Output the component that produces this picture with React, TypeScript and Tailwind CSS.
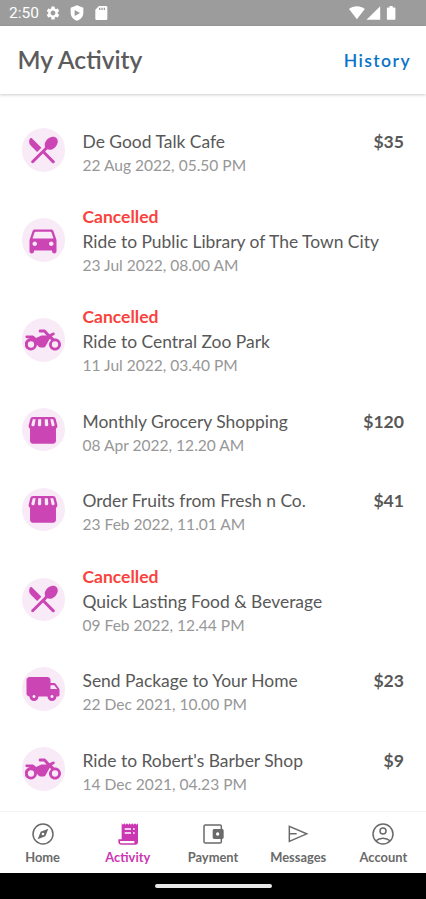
import type { ReactNode } from "react";
import { MdSettings } from "react-icons/md";

type IconName = "food" | "car" | "bike" | "store" | "truck";

type Activity = {
  icon: IconName;
  title: string;
  date: string;
  price?: string;
};

const activities: Activity[] = [
  { icon: "food", title: "De Good Talk Cafe", date: "22 Aug 2022, 05.50 PM", price: "$35" },
  { icon: "car", title: "Ride to Public Library of The Town City", date: "23 Jul 2022, 08.00 AM" },
  { icon: "bike", title: "Ride to Central Zoo Park", date: "11 Jul 2022, 03.40 PM" },
  { icon: "store", title: "Monthly Grocery Shopping", date: "08 Apr 2022, 12.20 AM", price: "$120" },
  { icon: "store", title: "Order Fruits from Fresh n Co.", date: "23 Feb 2022, 11.01 AM", price: "$41" },
  { icon: "food", title: "Quick Lasting Food & Beverage", date: "09 Feb 2022, 12.44 PM" },
  { icon: "truck", title: "Send Package to Your Home", date: "22 Dec 2021, 10.00 PM", price: "$23" },
  { icon: "bike", title: "Ride to Robert's Barber Shop", date: "14 Dec 2021, 04.23 PM", price: "$9" },
];

// rounded versions, react-icons only ships the square ones
const paths = {
  food: "m8.1 13.34 2.83-2.83-6.19-6.18c-.48-.48-1.31-.35-1.61.27-.71 1.49-.45 3.32.78 4.56l4.19 4.18zm6.78-1.81c1.53.71 3.68.21 5.27-1.38 1.91-1.91 2.28-4.65.81-6.12-1.46-1.46-4.2-1.1-6.12.81-1.59 1.59-2.09 3.74-1.38 5.27L4.4 19.17c-.39.39-.39 1.02 0 1.41.39.39 1.02.39 1.41 0L12 14.41l6.18 6.18c.39.39 1.02.39 1.41 0 .39-.39.39-1.02 0-1.41L13.41 13l1.47-1.47z",
  car: "M18.92 6.01C18.72 5.42 18.16 5 17.5 5h-11c-.66 0-1.21.42-1.42 1.01l-1.97 5.67c-.07.21-.11.43-.11.66v7.16c0 .83.67 1.5 1.5 1.5S6 20.33 6 19.5V19h12v.5c0 .82.67 1.5 1.5 1.5.82 0 1.5-.67 1.5-1.5v-7.16c0-.22-.04-.45-.11-.66l-1.97-5.67zM6.5 16c-.83 0-1.5-.67-1.5-1.5S5.67 13 6.5 13s1.5.67 1.5 1.5S7.33 16 6.5 16zm11 0c-.83 0-1.5-.67-1.5-1.5s.67-1.5 1.5-1.5 1.5.67 1.5 1.5-.67 1.5-1.5 1.5zM5 11l1.27-3.82c.14-.4.52-.68.95-.68h9.56c.43 0 .81.28.95.68L19 11H5z",
  bike: "M20 11c-.18 0-.36.03-.53.05L17.9 9.5l1.2-.6c.6-.3.9-.7.7-1.2-.2-.6-.8-.8-1.4-.5l-2.1.9-2.6-2.8A1 1 0 0 0 13 5h-2.900c-.55 0-1 .45-1 1s.45 1 1 1h2.490l1.800 2H11l-3.600 1.600-1.300-1.100A1.500 1.500 0 0 0 5 9H1.200C.65 9 .3 9.350.3 9.900s.35.900.9.900h2.100A4.100 4.100 0 1 0 8 15.200l1.200 1.300c.4.400.7.500 1.200.500h2c.5 0 .9-.2 1.200-.700l2.900-5.200 1.010 1.010c-.91.730-1.510 1.680-1.510 2.890 0 2.210 1.790 4 4 4s4-1.790 4-4-1.790-4-4-4zM4 17.100a2.100 2.100 0 1 1 0-4.200 2.100 2.100 0 0 1 0 4.200zm16 0a2.100 2.100 0 1 1 0-4.200 2.100 2.100 0 0 1 0 4.200z",
  store:
    "M21.500 8.890l-1.050-4.200c-.22-.9-.9-1.390-1.810-1.390H5.360c-.9 0-1.590.530-1.810 1.390L2.500 8.890c-.2.900.1 1.700.85 2.200V19.200c0 1.100.8 1.900 1.900 1.900h13.500c1.100 0 1.900-.8 1.900-1.900v-8.110c.75-.5 1.050-1.300.85-2.200zM5.200 4.900h1.900l-.7 3.700c-.1.500-.5.900-1.100.9-.7 0-1.100-.5-1-1.100zM8.800 4.900h2v3.600c0 .6-.4 1-1.100 1-.8 0-1.200-.5-1.100-1.200zM13.200 4.900h2l.3 3.400c.1.700-.4 1.200-1.200 1.200-.6 0-1.100-.4-1.100-1zM16.900 4.900h1.900l.9 3.500c.1.600-.3 1.100-1 1.100-.5 0-.9-.4-1-.9z",
  truck: "M19.5 8H17V6c0-1.1-.9-2-2-2H3c-1.1 0-2 .9-2 2v9c0 1.1.9 2 2 2 0 1.66 1.34 3 3 3s3-1.34 3-3h6c0 1.66 1.34 3 3 3s3-1.34 3-3h1c.55 0 1-.45 1-1v-3.33c0-.43-.14-.85-.4-1.2L20.3 8.4c-.19-.25-.49-.4-.8-.4zM6 18c-.55 0-1-.45-1-1s.45-1 1-1 1 .45 1 1-.45 1-1 1zm13.5-8.5 1.96 2.5H17V9.5h2.5zM18 18c-.55 0-1-.45-1-1s.45-1 1-1 1 .45 1 1-.45 1-1 1z",
};

const StatusBar = () => (
  <div className="flex h-[26px] shrink-0 items-center justify-between bg-[#9c9c9c] pl-[9px] pr-[29px] text-white">
    <div className="flex items-center">
      <span className="w-[36px] pt-[2px] font-[Roboto] text-[15.500px] leading-none">2:50</span>
      <MdSettings className="size-4" />
      <svg viewBox="0 0 24 24" className="ml-2 size-4" fill="currentColor">
        <path
          fillRule="evenodd"
          d="M12 .5 2.500 4v7.500c0 6 4 10 9.500 12 5.500-2 9.500-6 9.500-12V4L12 .5zM8.500 7.500v9l8-4.500-8-4.500z"
        />
      </svg>
      <svg viewBox="0 0 24 24" className="ml-2 size-4" fill="currentColor">
        <path d="M9 1.500h10.500c1.100 0 2 .9 2 2v17c0 1.100-.9 2-2 2h-14c-1.100 0-2-.9-2-2V7L9 1.500z" />
        <path d="M9 4h2v3.500H9zM12.500 4h2v3.500h-2zM16 4h2v3.500h-2z" fill="#9c9c9c" />
      </svg>
    </div>
    <svg width="48" height="15" viewBox="0 0 48 15" fill="currentColor">
      <path d="M0 3C4.600-.8 11.200-.8 15.800 3L7.900 13.300z" />
      <path d="M31.200.2v13.600H17.500z" />
      <path d="M38.900 1.500h1.700V0h3.100v1.500h1.700c.6 0 1 .4 1 1v10.400c0 .5-.4.9-.9.9h-6.700c-.5 0-.9-.4-.9-.9V2.500c0-.6.4-1 1-1z" />
    </svg>
  </div>
);

const ActivityRow = ({ icon, title, date, price }: Activity) => (
  <li className={`flex items-center ${price ? "h-[79.750px]" : "h-[100px]"}`}>
    <div className="flex size-[43.500px] shrink-0 items-center justify-center rounded-full bg-[#f8eaf7]">
      <svg viewBox="0 0 24 24" className="size-9 text-[#cb45b5]" fill="currentColor" fillRule="evenodd">
        <path d={paths[icon]} />
      </svg>
    </div>
    <div className={`ml-[17.500px] grow ${price ? "pt-[5px]" : "pt-[1px]"}`}>
      {!price && (
        <p className="text-[17.500px] font-bold leading-[25px] text-[#f8433d]">Cancelled</p>
      )}
      <div className="flex justify-between text-[17.450px] leading-[25px] text-[#585858]">
        <p className="whitespace-nowrap">{title}</p>
        {price && <p className="text-[17.600px] font-bold">{price}</p>}
      </div>
      <p className="text-[15.550px] leading-[22px] text-[#979797]">{date}</p>
    </div>
  </li>
);

type NavItemProps = {
  label: string;
  active?: boolean;
  children: ReactNode;
};

const NavItem = ({ label, active, children }: NavItemProps) => (
  <a className={`flex flex-1 flex-col items-center pt-[9px] ${active ? "text-[#cb36b2]" : "text-[#6a6a6a]"}`}>
    <svg viewBox="0 0 78 78" className="size-[26px]" fill="none" stroke="currentColor" strokeWidth="4.500">
      {children}
    </svg>
    <span className="mt-[1px] text-[12.900px] font-bold leading-[18px]">{label}</span>
  </a>
);

const App = () => {
  return (
    <div className="flex h-[899px] w-[426px] flex-col overflow-hidden bg-white font-[Lato,sans-serif]">
      <StatusBar />
      <header className="flex h-[68px] shrink-0 items-center justify-between bg-white pl-[17.500px] pr-[15px] shadow-[0_1px_3px_rgba(0,0,0,0.2)]">
        <h1 className="text-[24.600px] font-semibold text-[#5c5c5c]">My Activity</h1>
        <button className="pt-[2px] text-[17.600px] font-semibold tracking-[1.400px] text-[#0a73c8]">History</button>
      </header>
      <ul className="grow overflow-hidden pl-[21.500px] pr-[22px] pt-4">
        {activities.map((activity) => (
          <ActivityRow key={activity.date} {...activity} />
        ))}
      </ul>
      <nav className="flex h-[62px] shrink-0 border-t border-[#f3f3f3] bg-white">
        <NavItem label="Home">
          <circle cx="39" cy="39" r="30" />
          <path
            d="M55 23 46 46 23 55 32 32zM39 35a4 4 0 1 0 0 8 4 4 0 0 0 0-8z"
            fill="currentColor"
            fillRule="evenodd"
            stroke="none"
          />
        </NavItem>
        <NavItem label="Activity" active>
          <path
            d="M20 7l4 4 4-4 4 4 4-4 4 4 4-4 4 4 4-4 4 4 4-4 4 4 5-4v56c0 5-3 8-8 8H19c-5 0-9-3-9-8v-8h10zM29 22v4h19v-4zM54 22v4h5v-4zM29 34v4h19v-4zM54 34v4h5v-4zM15 60v3c0 2 2 4 4 4h39v-7z"
            fill="currentColor"
            fillRule="evenodd"
            stroke="none"
          />
        </NavItem>
        <NavItem label="Payment">
          <rect x="12" y="12" width="52" height="54" rx="4" />
          <path
            d="M43 24h23c3 0 5 2 5 5v20c0 3-2 5-5 5H43c-3 0-5-2-5-5V29c0-3 2-5 5-5zM53 34a5 5 0 1 0 0 10 5 5 0 0 0 0-10z"
            fill="currentColor"
            fillRule="evenodd"
            stroke="none"
          />
        </NavItem>
        <NavItem label="Messages">
          <path d="M13 16v45L65 38.500 13 16zM13 38.500h22" />
        </NavItem>
        <NavItem label="Account">
          <circle cx="39" cy="39" r="30" />
          <circle cx="39" cy="30" r="9" />
          <path d="M17 60c12-11 32-11 44 0" />
        </NavItem>
      </nav>
      <div className="flex h-[26px] shrink-0 items-center justify-center bg-black">
        <div className="h-1 w-[117px] rounded-full bg-[#e8e8e8]"></div>
      </div>
    </div>
  );
};

export default App;
